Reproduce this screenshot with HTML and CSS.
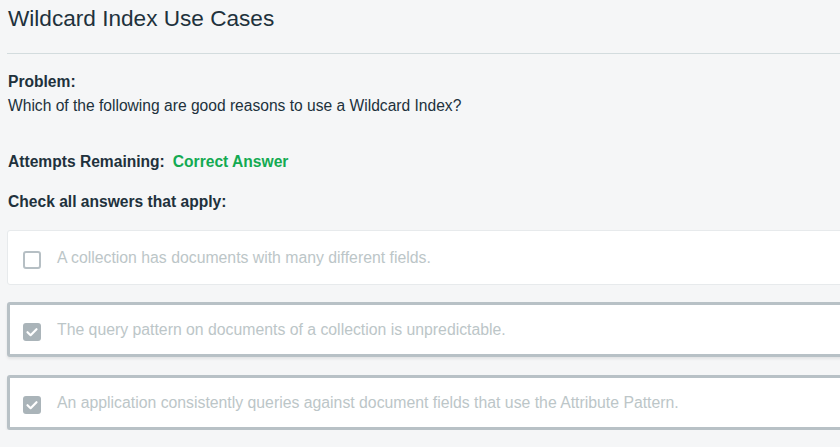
FILE: index.html
```html
<!DOCTYPE html>
<html>
<head>
<meta charset="utf-8">
<link rel="stylesheet" href="styles.css">
</head>
<body>
<div class="page">
  <h1 class="title">Wildcard Index Use Cases</h1>
  <div class="rule"></div>
  <div class="label">Problem:</div>
  <div class="question">Which of the following are good reasons to use a Wildcard Index?</div>
  <div class="attempts"><span class="label-inline">Attempts Remaining:</span><span class="correct">Correct Answer</span></div>
  <div class="instruct">Check all answers that apply:</div>
  <div class="options">
    <div class="option">
      <span class="box"></span>
      <span class="opt-text">A collection has documents with many different fields.</span>
    </div>
    <div class="option selected">
      <span class="box checked"><svg viewBox="0 0 18 18" width="18" height="18"><path d="M4.5 9.2 L7.6 12.2 L13.5 6.2" fill="none" stroke="#fff" stroke-width="2.2" stroke-linecap="round" stroke-linejoin="round"/></svg></span>
      <span class="opt-text">The query pattern on documents of a collection is unpredictable.</span>
    </div>
    <div class="option selected last">
      <span class="box checked"><svg viewBox="0 0 18 18" width="18" height="18"><path d="M4.5 9.2 L7.6 12.2 L13.5 6.2" fill="none" stroke="#fff" stroke-width="2.2" stroke-linecap="round" stroke-linejoin="round"/></svg></span>
      <span class="opt-text">An application consistently queries against document fields that use the Attribute Pattern.</span>
    </div>
  </div>
</div>
</body>
</html>
```
FILE: styles.css
```css
html, body {
  margin: 0;
  padding: 0;
  overflow: hidden;
  background: #f5f6f7;
}
body {
  font-family: "Liberation Sans", Arial, sans-serif;
  color: #21313c;
}
.page {
  width: 900px;
  padding: 4px 0 0 7px;
}
.title {
  margin: 0;
  font-size: 22.6px;
  line-height: 30px;
  font-weight: normal;
  padding-left: 1px;
}
.rule {
  margin-top: 19px;
  height: 1px;
  background: #d3dcde;
}
.label {
  margin-top: 16px;
  font-size: 15.6px;
  line-height: 24px;
  font-weight: bold;
  padding-left: 1px;
}
.question {
  font-size: 15.6px;
  line-height: 24px;
  padding-left: 1px;
}
.attempts {
  margin-top: 32px;
  font-size: 15.6px;
  line-height: 24px;
  font-weight: bold;
  padding-left: 1px;
  display: flex;
  gap: 8px;
}
.correct {
  color: #13aa52;
}
.instruct {
  margin-top: 16px;
  font-size: 15.6px;
  line-height: 24px;
  font-weight: bold;
  padding-left: 1px;
}
.options {
  margin-top: 16px;
  display: flex;
  flex-direction: column;
  gap: 17px;
}
.option {
  height: 53px;
  background: #fff;
  border: 1px solid #e7eaec;
  border-radius: 3px;
  display: flex;
  align-items: center;
  padding-left: 15px;
}
.option.selected {
  height: 49px;
  border: 3px solid #b8c1c6;
  padding-left: 13px;
  box-shadow: 0 2px 3px rgba(0, 0, 0, 0.08);
}
.option.last {
  margin-top: 1px;
}
.box {
  width: 18px;
  height: 18px;
  box-sizing: border-box;
  border: 2px solid #b6bfc4;
  border-radius: 3px;
  margin-top: 5px;
  flex: none;
  display: flex;
}
.box.checked {
  background: #aab4b9;
  border: none;
}
.opt-text {
  margin-left: 16px;
  font-size: 15.8px;
  color: #bcc6c8;
}
```
